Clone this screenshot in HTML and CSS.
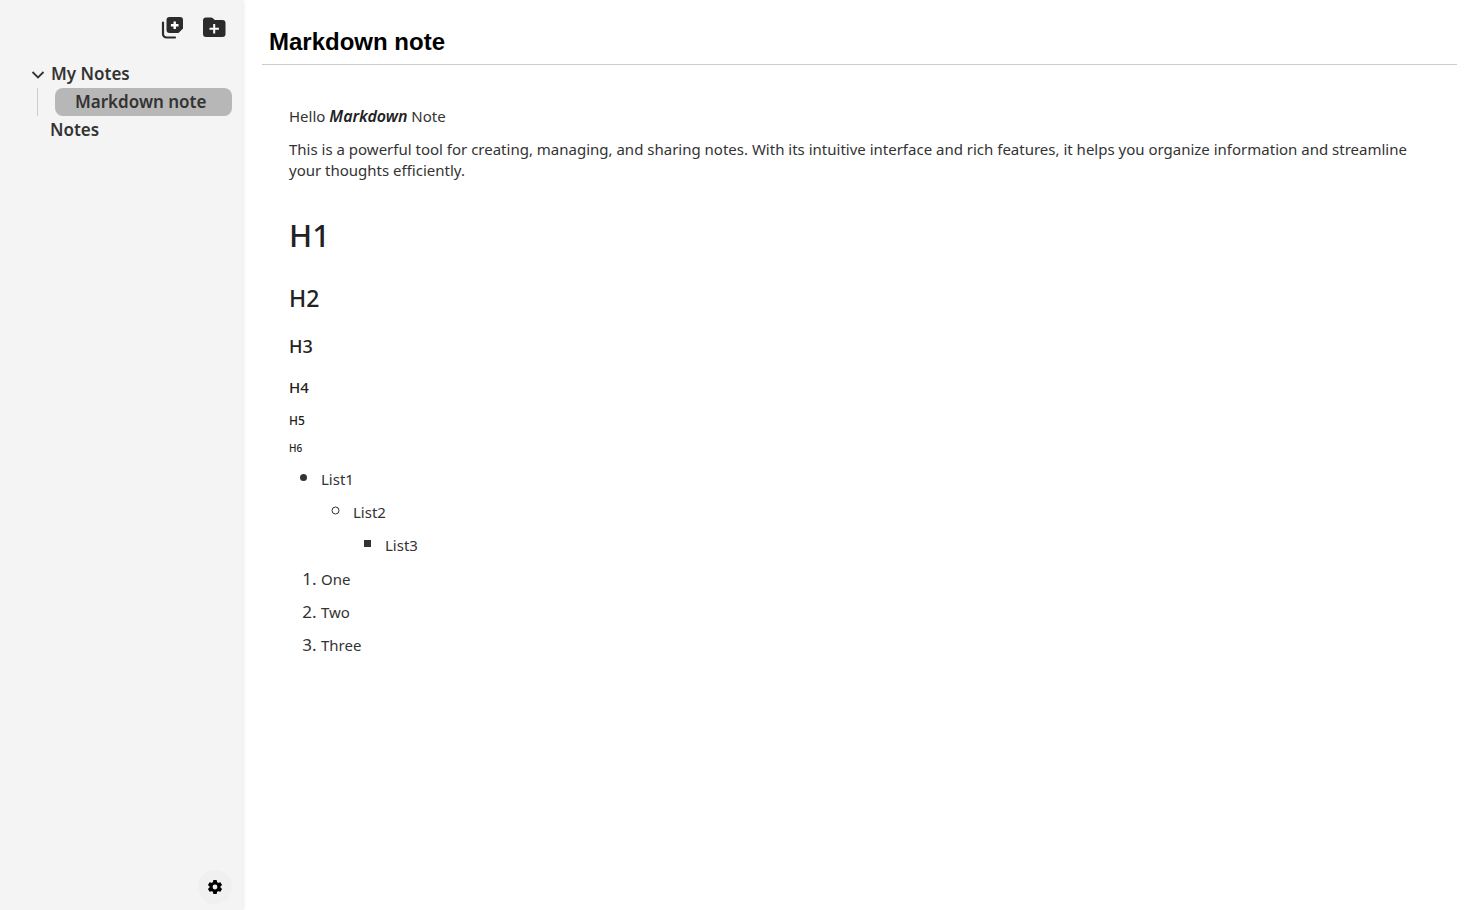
FILE: index.html
```html
<!DOCTYPE html>
<html lang="en">
<head>
<meta charset="utf-8">
<title>Markdown note</title>
<link rel="stylesheet" href="styles.css">
</head>
<body>
<div class="app">
  <aside class="sidebar">
    <div class="toolbar">
      <button class="icon-button" type="button" aria-label="New note">
        <svg width="24" height="24" viewBox="0 0 24 24" fill="#2b2b2b"><path d="M9.500 1H20a3 3 0 0 1 3 3v8.500L18.500 17h-9a3 3 0 0 1-3-3V4a3 3 0 0 1 3-3z"/><path d="M3 6.500V18a3.500 3.500 0 0 0 3.500 3.500H15" fill="none" stroke="#2b2b2b" stroke-width="2.200" stroke-linecap="round"/><path d="M14.700 5.500v7.600M10.900 9.300h7.600" stroke="#fff" stroke-width="2.400"/></svg>
      </button>
      <button class="icon-button" type="button" aria-label="New folder">
        <svg width="24" height="24" viewBox="0 0 24 24" fill="#2b2b2b"><path d="M4 1.500h5a2.500 2.500 0 0 1 1.600.6L12.800 4H20.500A3 3 0 0 1 23.500 7v11a3 3 0 0 1-3 3H4a3 3 0 0 1-3-3V4.500a3 3 0 0 1 3-3z"/><path d="M12.200 8v9.400M7.500 12.700h9.400" stroke="#fff" stroke-width="2"/></svg>
      </button>
    </div>
    <nav class="tree" aria-label="Notes">
      <button class="row row-open" type="button" aria-expanded="true">
        <svg width="14" height="14" viewBox="0 0 14 14" fill="none" stroke="#333" stroke-width="1.800"><path d="M1.500 5L7 10.500 12.500 5"/></svg>
        My Notes
      </button>
      <div class="children">
        <button class="row row-active" type="button" aria-current="page">Markdown note</button>
      </div>
      <button class="row row-closed" type="button">Notes</button>
    </nav>
    <button class="settings" type="button" aria-label="Settings">
      <svg width="16" height="16" viewBox="0 0 24 24"><path fill-rule="evenodd" d="M9.500 1.500h5l.7 3.200 1.800 1 3.100-1 2.500 4.300-2.400 2.200v1.600l2.400 2.200-2.500 4.300-3.100-1-1.800 1-.7 3.200h-5l-.7-3.200-1.800-1-3.100 1L1.400 15l2.400-2.200v-1.600L1.400 9l2.500-4.300 3.100 1 1.800-1zM12 8.400a3.600 3.600 0 1 0 0 7.200 3.600 3.600 0 0 0 0-7.200z"/></svg>
    </button>
  </aside>
  <main class="page">
    <input class="title" type="text" value="Markdown note" aria-label="Note title">
    <article class="note">
      <p>Hello <strong><em>Markdown</em></strong> Note</p>
      <p>This is a powerful tool for creating, managing, and sharing notes. With its intuitive interface and rich features, it helps you organize information and streamline your thoughts efficiently.</p>
      <h1>H1</h1>
      <h2>H2</h2>
      <h3>H3</h3>
      <h4>H4</h4>
      <h5>H5</h5>
      <h6>H6</h6>
      <ul>
        <li class="disc"><p>List1</p>
          <ul>
            <li class="circle"><p>List2</p>
              <ul>
                <li class="square"><p>List3</p></li>
              </ul>
            </li>
          </ul>
        </li>
      </ul>
      <ol>
        <li><p>One</p></li>
        <li><p>Two</p></li>
        <li><p>Three</p></li>
      </ol>
    </article>
  </main>
</div>
</body>
</html>
```
FILE: styles.css
```css
* { box-sizing: border-box; }
body { margin: 0; background: #fff; }
button { border: 0; padding: 0; background: none; font: inherit; color: inherit; cursor: pointer; }
svg { display: block; flex: none; }

.app { display: flex; min-height: 100vh; }

.sidebar {
  display: flex;
  flex-direction: column;
  flex: none;
  width: 243px;
  padding: 16px 11px 6px 30px;
  background: #f4f4f4;
  box-shadow: 0 0 4px rgba(0, 0, 0, 0.12);
  color: #333;
  font: 600 17px/28px "Noto Sans", sans-serif;
}
.toolbar { display: flex; justify-content: flex-end; gap: 18px; padding-right: 6px; }
.tree { display: flex; flex-direction: column; margin-top: 20px; }
.row { display: flex; align-items: center; height: 28px; text-align: left; }
.row-open { gap: 6px; padding-left: 1px; }
.row-closed { padding-left: 20px; }
.children { margin-left: 7px; padding-left: 17px; border-left: 1px solid #ccc; }
.row-active { width: 100%; padding-left: 20px; border-radius: 8px; background: #b7b7b7; }
.settings {
  display: grid;
  place-items: center;
  width: 34px;
  height: 34px;
  margin: auto 0 0 auto;
  border-radius: 50%;
  background: #f0f0f0;
}

.page { flex: 1; min-width: 0; padding: 20px 20px 20px 19px; }
.title {
  display: block;
  width: 100%;
  height: 45px;
  padding: 0 7px;
  border: 0;
  border-bottom: 1px solid #ccc;
  outline: 0;
  background: none;
  color: #000;
  font: bold 24px "Liberation Sans", Arial, sans-serif;
}

.note {
  padding: 41px 27px 0;
  color: #333;
  font: 400 15px/21px "Noto Sans", sans-serif;
}
.note p { margin: 0 0 12px; }
.note strong { color: #222; font-size: 16px; font-weight: 600; }
.note h1, .note h2, .note h3, .note h4, .note h5, .note h6 { color: #222; font-weight: 500; }
.note h1 { margin: 33px 0 26px; font-size: 31px; line-height: 42px; }
.note h2 { margin: 0 0 20px; font-size: 23px; line-height: 32px; }
.note h3 { margin: 0 0 19px; font-size: 18px; line-height: 24px; }
.note h4 { margin: 0 0 16px; font-size: 15px; line-height: 20px; }
.note h5 { margin: 0 0 12px; font-size: 12px; line-height: 16px; }
.note h6 { margin: 0 0 12px; font-size: 10px; line-height: 14px; }
.note ul, .note ol { margin: 0; padding-left: 32px; font-size: 17px; }
.note ul { font-size: 20px; }
.note ol { margin-top: 12px; }
.note li p { margin-bottom: 11px; font-size: 15px; }
.note ul p { margin-bottom: 10px; }
.disc { list-style: disc; }
.circle { list-style: circle; }
.square { list-style: square; }
```
